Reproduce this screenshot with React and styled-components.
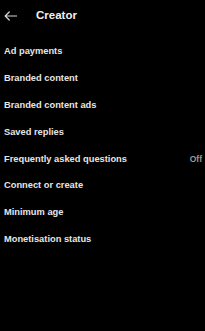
import React from "react";
import styled, { createGlobalStyle } from "styled-components";

const Global = createGlobalStyle`
  html, body { margin: 0; padding: 0; background: #000; }
  body { font-family: "Liberation Sans", Arial, sans-serif; }
`;

const Screen = styled.div`
  width: 205px;
  height: 331px;
  background: #000;
  display: flex;
  flex-direction: column;
  overflow: hidden;
`;

const Header = styled.div`
  height: 32px;
  display: flex;
  align-items: center;
  padding-left: 4px;
  gap: 19px;
`;

const BackButton = styled.div`
  width: 13px;
  height: 10px;
  display: flex;
  align-items: center;
  color: #d8d8d8;
`;

const Title = styled.h1`
  margin: 0;
  font-size: 11.5px;
  font-weight: 700;
  color: #f0f0f0;
  line-height: 1;
`;

const List = styled.div`
  display: flex;
  flex-direction: column;
  padding-top: 6px;
`;

const Row = styled.div`
  height: 26.8px;
  display: flex;
  align-items: center;
  justify-content: space-between;
  padding: 0 3px 0 4px;
`;

const Label = styled.span`
  font-size: 9.3px;
  font-weight: 700;
  color: #e6e6e6;
  white-space: nowrap;
`;

const Value = styled.span`
  font-size: 8.5px;
  font-weight: 600;
  color: #9a9a9a;
`;

const items = [
  { label: "Ad payments" },
  { label: "Branded content" },
  { label: "Branded content ads" },
  { label: "Saved replies" },
  { label: "Frequently asked questions", value: "Off" },
  { label: "Connect or create" },
  { label: "Minimum age" },
  { label: "Monetisation status" },
];

export default function App() {
  return (
    <Screen>
      <Global />
      <Header>
        <BackButton>
          <svg width="13" height="10" viewBox="0 0 13 10" fill="none">
            <path d="M12.5 5H1.2M5.2 1L1.2 5l4 4" stroke="currentColor" strokeWidth="1.2" strokeLinecap="round" strokeLinejoin="round" />
          </svg>
        </BackButton>
        <Title>Creator</Title>
      </Header>
      <List>
        {items.map((it) => (
          <Row key={it.label}>
            <Label>{it.label}</Label>
            {it.value && <Value>{it.value}</Value>}
          </Row>
        ))}
      </List>
    </Screen>
  );
}
